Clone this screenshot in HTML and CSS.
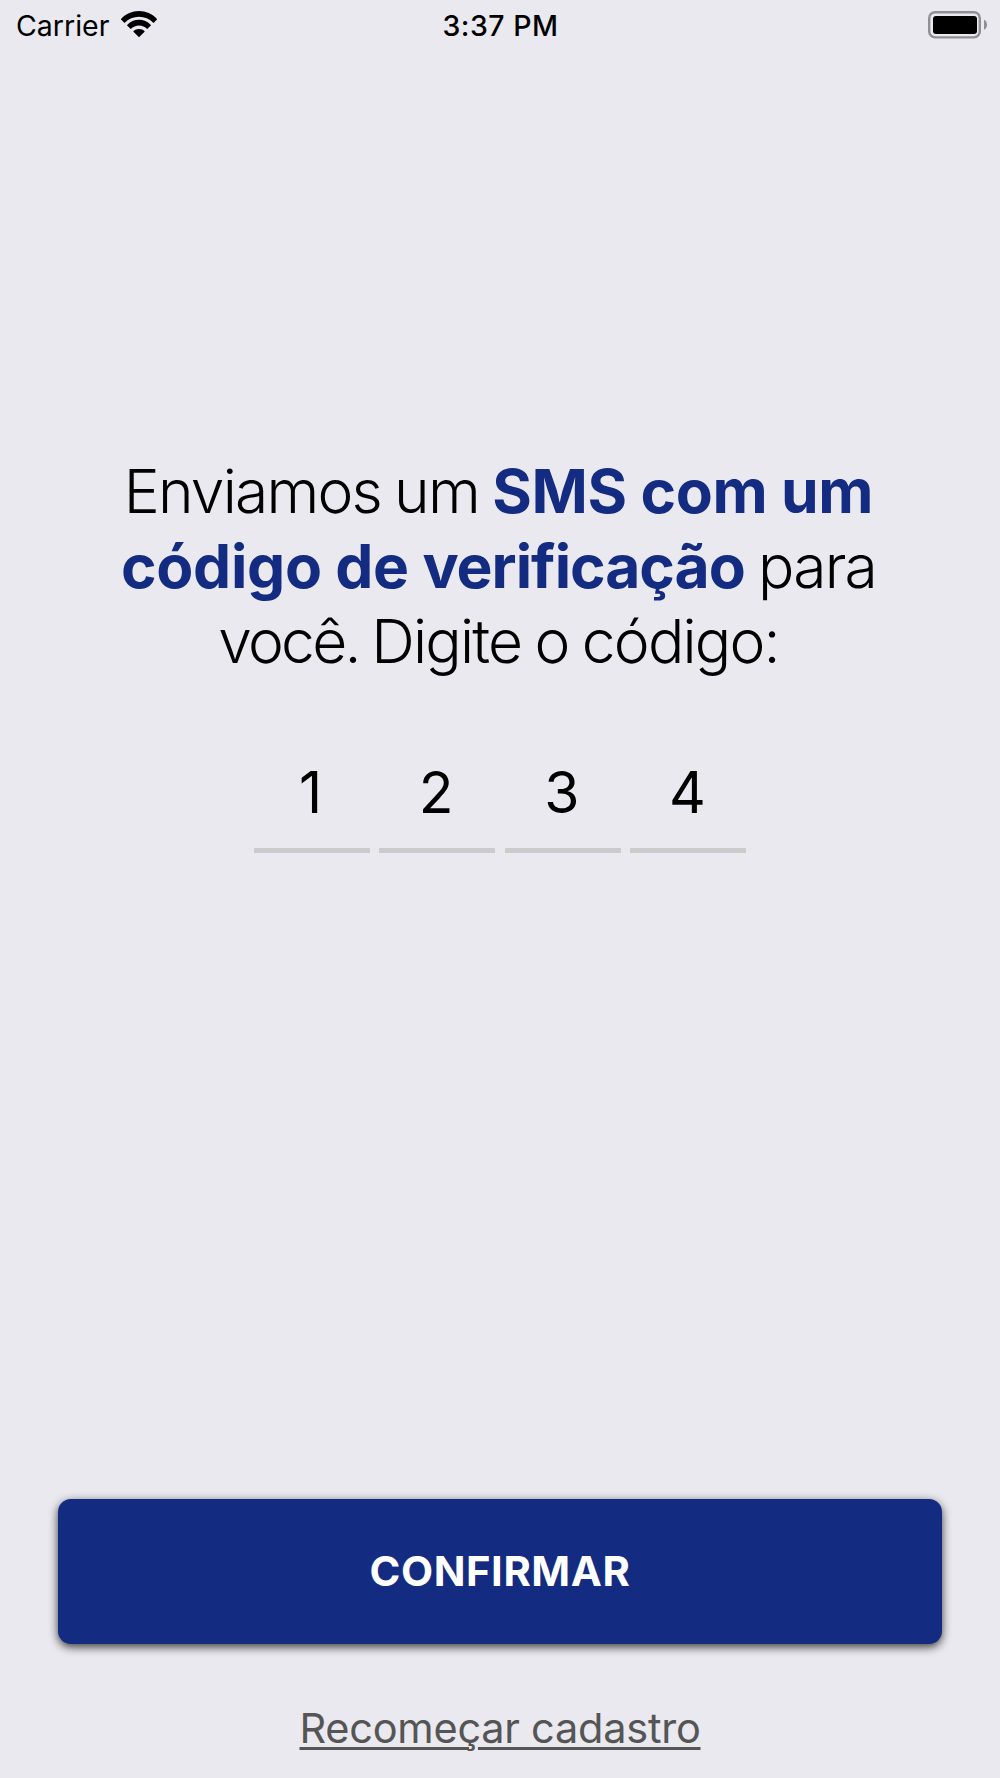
FILE: index.html
```html
<!DOCTYPE html>
<html lang="pt-BR">
<head>
    <meta charset="UTF-8">
    <meta name="viewport" content="width=device-width, initial-scale=1.0">
    <title>Código de verificação</title>
    <link rel="stylesheet" href="styles.css">
</head>
<body>
    <div class="screen">
        <!-- Status bar -->
        <header class="status-bar">
            <div class="status-left">
                <span class="carrier">Carrier</span>
                <svg class="wifi" width="38" height="28" viewBox="0 0 38 28">
                    <path d="M0.8 9.2C10.5-1.6 27.5-1.6 37.2 9.2L33.5 13C25.8 4.6 12.2 4.6 4.5 13Z"/>
                    <path d="M6.9 15.2C13.5 8 24.5 8 31.1 15.2L27.3 19C22.8 14.2 15.2 14.2 10.7 19Z"/>
                    <path d="M13.2 21.4C16.5 18.2 21.5 18.2 24.8 21.4L19 27.2Z"/>
                </svg>
            </div>
            <span class="time">3:37 PM</span>
            <div class="status-right">
                <svg class="battery" width="60" height="28" viewBox="0 0 60 28">
                    <rect class="battery-case" x="1.2" y="1.2" width="50.6" height="25.2" rx="6"/>
                    <rect x="5" y="5" width="44" height="18" rx="3"/>
                    <path class="battery-tip" d="M56 8.8C60 10.3 60 17.3 56 18.8Z"/>
                </svg>
            </div>
        </header>

        <main class="content">
            <p class="message">
                Enviamos um <strong>SMS com um</strong><br>
                <strong>código de <span class="tight">verificação</span></strong> para<br>
                <span class="tighter">você. </span>Digite o código:
            </p>
            <div class="code">
                <span class="digit">1</span>
                <span class="digit">2</span>
                <span class="digit">3</span>
                <span class="digit">4</span>
            </div>
        </main>

        <footer class="actions">
            <button class="confirm-button">CONFIRMAR</button>
            <a href="#" class="restart-link">Recomeçar cadastro</a>
        </footer>
    </div>
</body>
</html>
```

FILE: styles.css
```css
* {
    margin: 0;
    padding: 0;
    box-sizing: border-box;
    font-family: Inter, 'Liberation Sans', sans-serif;
}

body {
    background: #e9e9ef;
    color: #000;
}

.screen {
    width: 1000px;
    height: 1778px;
    display: flex;
    flex-direction: column;
    overflow: hidden;
}

.status-bar {
    height: 53px;
    padding: 0 12px 0 16px;
    display: grid;
    grid-template-columns: 1fr auto 1fr;
    align-items: start;
}

.status-left {
    display: flex;
    gap: 11px;
}

.carrier,
.time {
    font-size: 28.5px;
    line-height: 34px;
    padding-top: 9px;
}

.time {
    font-weight: 500;
    letter-spacing: 0.5px;
    margin-left: -3px;
}

.wifi {
    margin-top: 10px;
}

.status-right {
    display: flex;
    justify-content: flex-end;
    padding-top: 11px;
}

.battery-case {
    fill: none;
    stroke: #8f8f94;
    stroke-width: 2.4;
}

.battery-tip {
    fill: #8f8f94;
}

.content {
    flex: 1;
    display: flex;
    flex-direction: column;
    align-items: center;
    padding-top: 401px;
}

.message {
    padding-right: 3px;
    font-size: 60.5px;
    font-weight: 300;
    line-height: 75px;
    letter-spacing: -1.8px;
    word-spacing: -2px;
    text-align: center;
    white-space: nowrap;
}

.message strong {
    font-weight: 700;
    letter-spacing: -0.3px;
    word-spacing: -0.5px;
    color: #132b80;
}

.message .tight {
    letter-spacing: -1px;
}

.message .tighter {
    letter-spacing: -2.7px;
}

.code {
    display: flex;
    gap: 9.6px;
    margin-top: 71px;
}

.digit {
    width: 116px;
    height: 103px;
    padding-right: 2px;
    border-bottom: 5px solid #cbcbcb;
    font-size: 57px;
    line-height: 86px;
    text-align: center;
}

.actions {
    display: flex;
    flex-direction: column;
    align-items: center;
    height: 279.5px;
}

.confirm-button {
    width: 884px;
    height: 145px;
    border: none;
    border-radius: 13px;
    background: #132b80;
    box-shadow: 0 3px 10px rgba(0, 0, 0, 0.75);
    color: #fff;
    font-size: 41.7px;
    font-weight: 700;
    letter-spacing: 0.6px;
    cursor: pointer;
}

.restart-link {
    margin-top: 59px;
    color: #555;
    font-size: 41.5px;
    line-height: 50px;
    letter-spacing: -0.25px;
    text-decoration-thickness: 3px;
    text-underline-offset: 4px;
}
```
